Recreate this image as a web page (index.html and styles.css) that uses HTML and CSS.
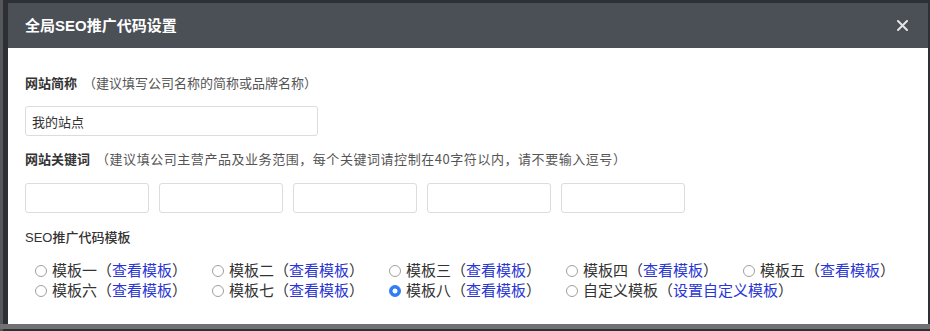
FILE: index.html
```html
<!DOCTYPE html>
<html lang="zh-CN">
<head>
<meta charset="utf-8">
<title>全局SEO推广代码设置</title>
<link rel="stylesheet" href="styles.css">
</head>
<body>
<div class="backdrop">
  <div class="modal">
    <div class="modal-header">
      <h1 class="modal-title">全局SEO推广代码设置</h1>
      <button class="modal-close" type="button" aria-label="关闭">
        <svg width="11" height="11" viewBox="0 0 11 11"><path d="M1 1L10 10M10 1L1 10" stroke="#e4e5e7" stroke-width="2" stroke-linecap="round"/></svg>
      </button>
    </div>
    <div class="modal-body">
      <div class="field-label"><b>网站简称</b><span class="hint">（建议填写公司名称的简称或品牌名称）</span></div>
      <input class="text-input site-name" type="text" value="我的站点">

      <div class="field-label"><b>网站关键词</b><span class="hint wide">（建议填公司主营产品及业务范围，每个关键词请控制在40字符以内，请不要输入逗号）</span></div>
      <div class="keyword-row">
        <input class="text-input keyword" type="text">
        <input class="text-input keyword" type="text">
        <input class="text-input keyword" type="text">
        <input class="text-input keyword" type="text">
        <input class="text-input keyword" type="text">
      </div>

      <div class="field-label plain">SEO推广代码模板</div>
      <div class="template-grid">
        <label class="tpl"><span class="radio"></span>模板一（<a href="#">查看模板</a>）</label>
        <label class="tpl"><span class="radio"></span>模板二（<a href="#">查看模板</a>）</label>
        <label class="tpl"><span class="radio"></span>模板三（<a href="#">查看模板</a>）</label>
        <label class="tpl"><span class="radio"></span>模板四（<a href="#">查看模板</a>）</label>
        <label class="tpl"><span class="radio"></span>模板五（<a href="#">查看模板</a>）</label>
        <label class="tpl"><span class="radio"></span>模板六（<a href="#">查看模板</a>）</label>
        <label class="tpl"><span class="radio"></span>模板七（<a href="#">查看模板</a>）</label>
        <label class="tpl"><span class="radio checked"></span>模板八（<a href="#">查看模板</a>）</label>
        <label class="tpl"><span class="radio"></span>自定义模板（<a href="#">设置自定义模板</a>）</label>
      </div>
    </div>
  </div>
  <div class="backdrop-strip"></div>
</div>
</body>
</html>
```

FILE: styles.css
```css
* { box-sizing: border-box; }

html, body {
  margin: 0;
  padding: 0;
}

body {
  background: #2d3035;
  font-family: "Liberation Sans", "Noto Sans CJK SC", sans-serif;
  color: #333;
}

.backdrop {
  height: 331px;
  overflow: hidden;
  padding: 3px 2px 0 8px;
  background: linear-gradient(to right, #55575b 0, #55575b 3px, #2d3035 3px);
}

.modal {
  width: 920px;
  height: 321px;
  background: #fff;
  display: flex;
  flex-direction: column;
}

.backdrop-strip {
  height: 5px;
  margin-left: -8px;
  margin-right: -2px;
  background: #707172;
}

.modal-header {
  height: 45px;
  flex: none;
  background: #4b4f56;
  display: flex;
  align-items: center;
  justify-content: space-between;
  padding: 0 20px 0 17px;
}

.modal-title {
  margin: 0;
  font-size: 15px;
  font-weight: bold;
  color: #fff;
  line-height: 20px;
}

.modal-close {
  border: 0;
  background: none;
  padding: 0;
  width: 11px;
  height: 11px;
  display: flex;
}

.modal-body {
  padding: 25px 17px 0 17px;
}

.field-label {
  font-size: 13px;
  line-height: 20px;
  height: 20px;
  color: #333;
  white-space: nowrap;
}

.field-label b {
  font-weight: bold;
}

.field-label .hint {
  font-family: "Noto Sans CJK SC", sans-serif;
  font-size: 13px;
  color: #555;
  margin-left: 6px;
}

.field-label .hint.wide {
  letter-spacing: 0.55px;
}

.field-label.plain {
  font-weight: 500;
  margin-top: 15px;
}

.text-input {
  display: block;
  height: 30px;
  border: 1px solid #dcdcdc;
  border-radius: 3px;
  padding: 0 6px;
  font-family: inherit;
  font-size: 13px;
  color: #333;
  background: #fff;
  outline: none;
}

.site-name {
  width: 293px;
  margin: 13px 0 13px;
}

.keyword-row {
  display: flex;
  gap: 10px;
  margin-top: 14px;
}

.keyword {
  width: 124px;
}

.template-grid {
  display: grid;
  grid-template-columns: repeat(5, 177px);
  grid-auto-rows: 20px;
  padding-left: 10px;
  margin-top: 13px;
}

.tpl {
  display: flex;
  align-items: center;
  font-size: 15px;
  line-height: 20px;
  color: #333;
  white-space: nowrap;
}

.tpl a {
  color: #2a36d4;
  text-decoration: none;
}

.radio {
  width: 12px;
  height: 12px;
  border: 1px solid #a0a0a0;
  border-radius: 50%;
  margin-right: 5px;
  flex: none;
  background: #fff;
}

.radio.checked {
  border-color: #2f7cf6;
  background: radial-gradient(circle, #fff 0 2.2px, #2f7cf6 2.8px);
}
```
